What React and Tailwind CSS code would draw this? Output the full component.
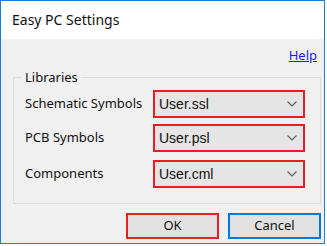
import React from 'react';

const Chevron = () => (
  <svg width="10" height="6" viewBox="0 0 10 6" className="shrink-0">
    <polyline points="0.5,0.5 5,5 9.5,0.5" fill="none" stroke="#606060" strokeWidth="1.2" />
  </svg>
);

const Combo = ({ value }) => (
  <div className="ml-auto mr-[15px] w-[152px] h-[28px] border-2 border-[#ed1c24] bg-[#e5e5e5] flex items-center pl-[4px] pr-[6px]">
    <span className="flex-1 text-[14px] text-[#111] font-['Liberation_Sans',sans-serif]">{value}</span>
    <Chevron />
  </div>
);

export default function App() {
  const rows = [
    { label: 'Schematic Symbols', value: 'User.ssl', gap: 'mt-0' },
    { label: 'PCB Symbols', value: 'User.psl', gap: 'mt-[6px]' },
    { label: 'Components', value: 'User.cml', gap: 'mt-[8px]' },
  ];

  return (
    <div className="w-[327px] h-[246px] bg-white font-['Noto_Sans',sans-serif] text-[#111]">
      <div className="w-[325px] h-[244px] border border-[#1a7fd4] flex flex-col">
        <div className="h-[38px] shrink-0 bg-white flex items-center pl-[11px] pb-[1px] text-[14px]">
          Easy PC Settings
        </div>
        <div className="flex-1 bg-[#f0f0f0] flex flex-col">
          <div className="h-[30px] shrink-0 flex justify-end pr-[7px] pt-[8px] text-[13px] leading-[16px]">
            <a className="text-[#1a1aff] underline cursor-pointer">Help</a>
          </div>
          <fieldset className="ml-[12px] mr-[3px] border border-[#dcdcdc] pb-[15px]">
            <legend className="ml-[8px] px-[3px] text-[13px] leading-[16px]">Libraries</legend>
            <div className="flex flex-col pt-[5px]">
              {rows.map((r) => (
                <div key={r.label} className={`flex items-center pl-[11px] ${r.gap}`}>
                  <span className="text-[13px]">{r.label}</span>
                  <Combo value={r.value} />
                </div>
              ))}
            </div>
          </fieldset>
          <div className="flex justify-end gap-[9px] mr-[3px] mt-[9px]">
            <button className="w-[93px] h-[26px] border-2 border-[#ed1c24] bg-[#e1e1e1] text-[13px]">OK</button>
            <button className="w-[93px] h-[26px] border-2 border-[#0078d7] bg-[#e1e1e1] text-[13px]">Cancel</button>
          </div>
        </div>
      </div>
    </div>
  );
}
